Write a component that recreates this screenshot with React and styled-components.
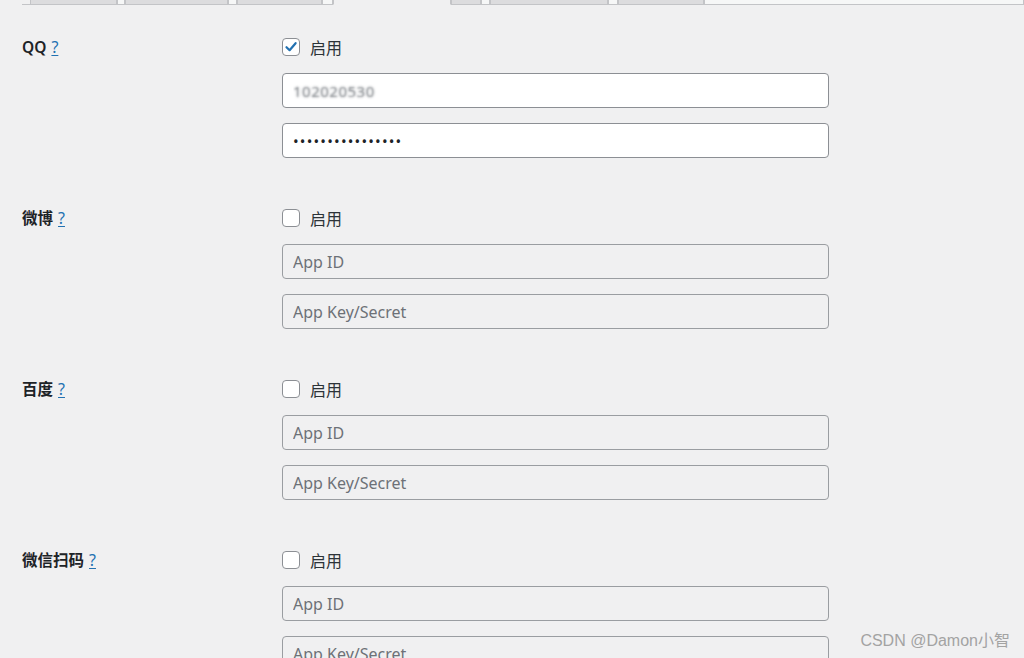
import React from "react";
import styled, { createGlobalStyle } from "styled-components";

const Global = createGlobalStyle`
  html, body { margin: 0; padding: 0; overflow: hidden; background: #f0f0f1; }
  body {
    font-family: "Noto Sans", "Noto Sans CJK SC", "Open Sans", sans-serif;
    color: #1d2327;
  }
  * { box-sizing: border-box; }
`;

const Page = styled.div`
  position: relative;
  width: 1024px;
  height: 658px;
  overflow: hidden;
  background: #f0f0f1;
`;

const TabBar = styled.div`
  display: flex;
  align-items: flex-end;
  height: 5px;
  margin-left: 22px;
  padding-left: 8px;
  border-bottom: 1px solid #c3c4c7;
`;

const Tab = styled.div`
  width: ${(p) => p.$w}px;
  height: 5px;
  margin-bottom: -1px;
  background: ${(p) => (p.$active ? "#f0f0f1" : p.$light ? "#f6f7f7" : "#dcdcde")};
  border: 1px solid #c3c4c7;
  border-top: none;
  border-bottom: ${(p) => (p.$active ? "1px solid #f0f0f1" : "1px solid #c3c4c7")};
  flex: ${(p) => (p.$grow ? 1 : "none")};
`;

const Form = styled.div`
  display: flex;
  flex-direction: column;
  gap: 48px;
  padding: 30px 0 0 22px;
`;

const Section = styled.div`
  display: grid;
  grid-template-columns: 260px 547px;
  align-items: start;
`;

const Label = styled.div`
  font-size: 15.5px;
  font-weight: 600;
  line-height: 24px;
  color: #1d2327;
  display: flex;
  align-items: center;
  gap: 5px;
`;

const Help = styled.a`
  color: #2271b1;
  font-weight: 400;
  font-size: 16px;
  text-decoration: underline;
  text-underline-offset: 2px;
`;

const Fields = styled.div`
  display: flex;
  flex-direction: column;
`;

const CheckRow = styled.label`
  display: flex;
  align-items: center;
  gap: 10px;
  height: 24px;
  font-size: 16px;
  color: #2c3338;
  margin-bottom: 14px;
`;

const Box = styled.span`
  width: 18px;
  height: 18px;
  border: 1px solid #8c8f94;
  border-radius: 4px;
  background: #fff;
  display: flex;
  align-items: center;
  justify-content: center;
`;

const Input = styled.input`
  width: 547px;
  height: 35px;
  padding: 0 10px;
  border: 1px solid ${(p) => (p.disabled ? "#9a9da1" : "#8c8f94")};
  border-radius: 4px;
  background: ${(p) => (p.disabled ? "#f0f0f1" : "#fff")};
  font-family: "Noto Sans", "Open Sans", sans-serif;
  font-size: 16px;
  color: #2c3338;
  outline: none;
  & + & { margin-top: 15px; }
  &::placeholder { color: #6d7177; opacity: 1; }
`;

const BlurInput = styled(Input)`
  font-size: 15px;
  color: transparent;
  text-shadow: 0 0 2.5px rgba(100, 105, 112, 0.95);
  letter-spacing: 0.5px;
`;

const PassInput = styled(Input)`
  font-size: 15px;
  letter-spacing: 1.2px;
  color: #1d2327;
`;

const Watermark = styled.div`
  position: absolute;
  right: 14px;
  bottom: 7px;
  font-family: "Liberation Sans", "Noto Sans CJK SC", sans-serif;
  font-size: 16px;
  color: #a3a3a3;
`;

function Check({ checked }) {
  return (
    <Box>
      {checked && (
        <svg width="14" height="14" viewBox="0 0 14 14">
          <path d="M2.5 7.2 L5.6 10.2 L11.6 3.2" fill="none" stroke="#2271b1" strokeWidth="2.2" strokeLinecap="round" strokeLinejoin="round" />
        </svg>
      )}
    </Box>
  );
}

const providers = [
  { name: "QQ", enabled: true },
  { name: "微博", enabled: false },
  { name: "百度", enabled: false },
  { name: "微信扫码", enabled: false },
];

export default function App() {
  return (
    <Page>
      <Global />
      <TabBar>
        <Tab $w={87} />
        <Tab $w={8} $light />
        <Tab $w={103} />
        <Tab $w={9} $light />
        <Tab $w={85} />
        <Tab $w={11} $light />
        <Tab $w={118} $active />
        <Tab $w={30} />
        <Tab $w={9} $light />
        <Tab $w={118} />
        <Tab $w={10} $light />
        <Tab $w={86} />
        <Tab $light $grow />
      </TabBar>
      <Form>
        {providers.map((p) => (
          <Section key={p.name}>
            <Label>
              {p.name} <Help href="#">?</Help>
            </Label>
            <Fields>
              <CheckRow>
                <Check checked={p.enabled} />
                启用
              </CheckRow>
              {p.enabled ? (
                <>
                  <BlurInput readOnly value="102020530" />
                  <PassInput type="password" readOnly value="abcdefghijklmnop" />
                </>
              ) : (
                <>
                  <Input disabled placeholder="App ID" />
                  <Input disabled placeholder="App Key/Secret" />
                </>
              )}
            </Fields>
          </Section>
        ))}
      </Form>
      <Watermark>CSDN @Damon小智</Watermark>
    </Page>
  );
}
